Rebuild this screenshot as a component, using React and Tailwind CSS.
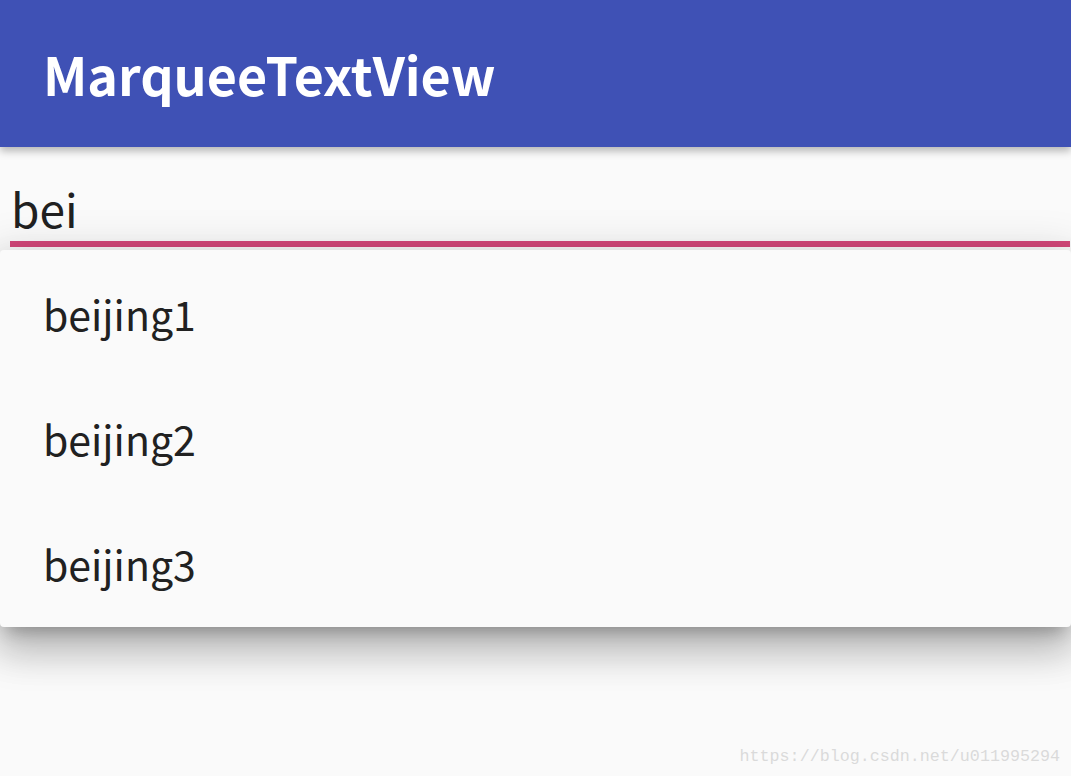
export default function App() {
  const items = ["beijing1", "beijing2", "beijing3"];
  return (
    <div className="relative h-[776px] w-[1071px] overflow-hidden bg-[#fafafa]" style={{ fontFamily: '"Noto Sans CJK SC", "Noto Sans", sans-serif' }}>
      <header className="relative z-20 flex h-[147px] items-center bg-[#3f51b5] pl-[43px] shadow-[0_4px_8px_rgba(0,0,0,0.28)]">
        <h1 className="text-[52px] font-bold leading-none text-white">MarqueeTextView</h1>
      </header>
      <div className="relative z-0 pt-[31px]">
        <div className="pl-[11px] text-[46px] leading-[60px] text-[#212121]">bei</div>
        <div className="ml-[10px] mr-[1px] mt-[3px] h-[6px] bg-[#d4487a]" />
      </div>
      <div className="relative z-10 mt-[3px] rounded-[4px] bg-[#fafafa] py-[1px] shadow-[0_24px_38px_3px_rgba(0,0,0,0.18),0_9px_46px_8px_rgba(0,0,0,0.14),0_11px_15px_-7px_rgba(0,0,0,0.24)]">
        {items.map((t) => (
          <div key={t} className="flex h-[125px] items-center pl-[43px] text-[41px] text-[#212121]">
            {t}
          </div>
        ))}
      </div>
      <div className="absolute bottom-[10px] right-[11px] text-[16.7px] leading-none text-[#dadada]" style={{ fontFamily: '"Liberation Mono", monospace' }}>
        https://blog.csdn.net/u011995294
      </div>
    </div>
  );
}
